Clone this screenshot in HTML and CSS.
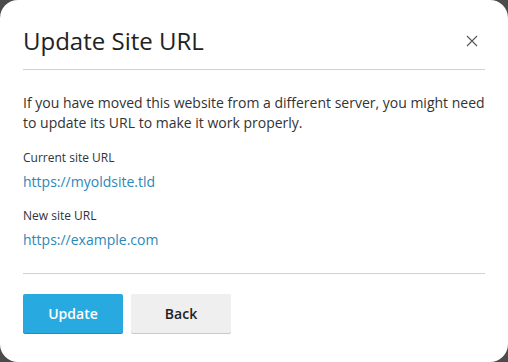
FILE: index.html
```html
<!DOCTYPE html>
<html lang="en">
<head>
    <meta charset="UTF-8">
    <meta name="viewport" content="width=device-width, initial-scale=1.0">
    <title>Update Site URL</title>
    <link rel="stylesheet" href="styles.css">
</head>
<body>
    <div class="dialog">
        <div class="dialog-header">
            <h1 class="dialog-title">Update Site URL</h1>
            <button class="close-button" aria-label="Close">
                <svg width="12" height="12" viewBox="0 0 12 12">
                    <path d="M1 1L11 11M11 1L1 11" stroke="#555" stroke-width="1.1" fill="none"/>
                </svg>
            </button>
        </div>

        <div class="dialog-body">
            <p class="intro">If you have moved this website from a different server, you might need to update its URL to make it work properly.</p>

            <div class="field">
                <div class="field-label">Current site URL</div>
                <a href="#" class="field-value">https://myoldsite.tld</a>
            </div>

            <div class="field">
                <div class="field-label">New site URL</div>
                <a href="#" class="field-value">https://example.com</a>
            </div>
        </div>

        <div class="dialog-footer">
            <button class="btn btn-primary">Update</button>
            <button class="btn">Back</button>
        </div>
    </div>
</body>
</html>
```

FILE: styles.css
```css
* {
    box-sizing: border-box;
    font-family: 'Open Sans', 'Noto Sans', sans-serif;
}

body {
    margin: 0;
    width: 508px;
    height: 362px;
    background-color: #4b4b4b;
    overflow: hidden;
}

.dialog {
    width: 508px;
    height: 362px;
    background-color: #ffffff;
    border-radius: 18px;
    padding: 0 23px;
    display: flex;
    flex-direction: column;
}

.dialog-header {
    display: flex;
    align-items: center;
    justify-content: space-between;
    padding: 25px 0 12px;
    border-bottom: 1px solid #d1d1d1;
}

.dialog-title {
    margin: 0;
    font-size: 24px;
    font-weight: 400;
    line-height: 32px;
    color: #222222;
}

.close-button {
    border: none;
    background: none;
    padding: 0;
    margin-right: 7px;
    width: 12px;
    height: 12px;
    cursor: pointer;
}

.close-button svg {
    display: block;
}

.dialog-body {
    padding: 23px 0 23px;
    border-bottom: 1px solid #d1d1d1;
}

.intro {
    margin: 0 0 16px;
    font-size: 14px;
    line-height: 20px;
    color: #333333;
}

.field {
    display: flex;
    flex-direction: column;
    align-items: flex-start;
}

.field + .field {
    margin-top: 15px;
}

.field-label {
    font-size: 12px;
    line-height: 18px;
    color: #333333;
}

.field-value {
    margin-top: 5px;
    font-size: 14px;
    line-height: 20px;
    color: #2b88b8;
    text-decoration: none;
}

.dialog-footer {
    display: flex;
    gap: 8px;
    padding-top: 20px;
}

.btn {
    width: 100px;
    height: 39px;
    border: none;
    border-radius: 2px;
    font-size: 14px;
    font-weight: 600;
    color: #222222;
    background-color: #efefef;
    box-shadow: 0 1px 0 #c9c9c9;
    cursor: pointer;
}

.btn-primary {
    color: #ffffff;
    background-color: #28aae1;
    box-shadow: 0 1px 0 #1f8fc0;
}
```
